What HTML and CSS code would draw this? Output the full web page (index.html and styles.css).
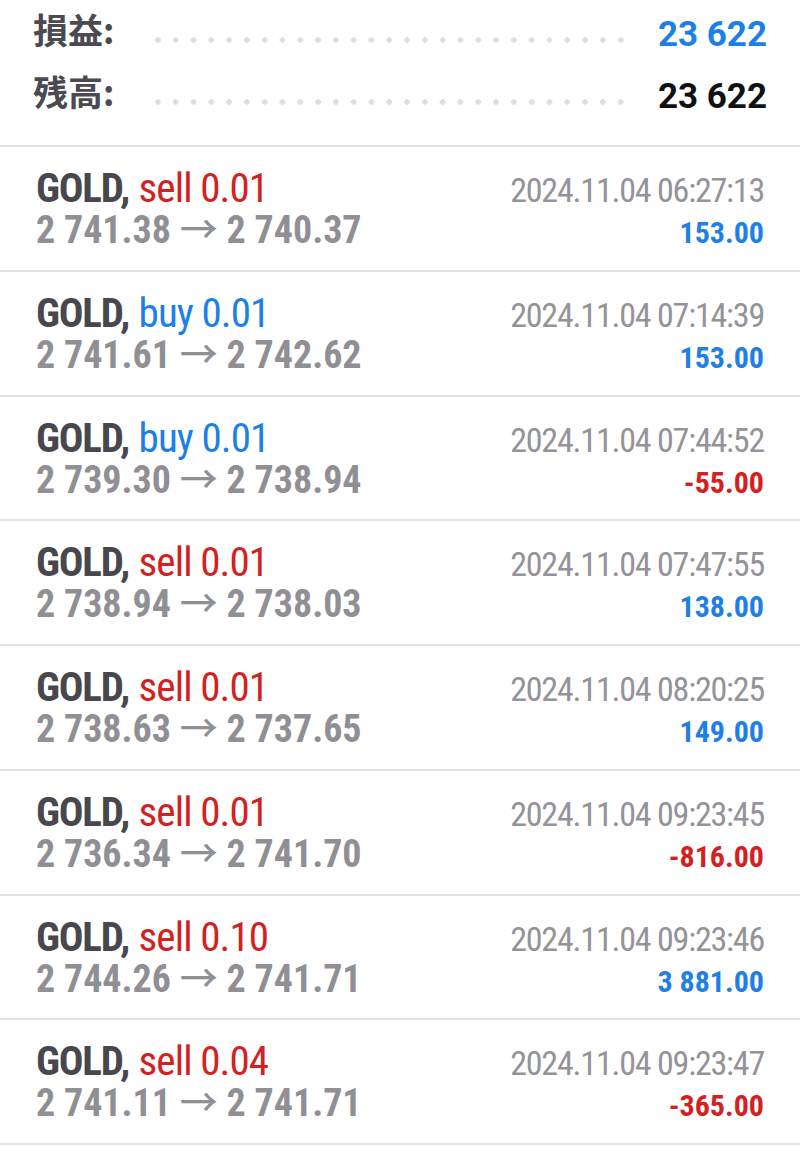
FILE: index.html
```html
<!DOCTYPE html>
<html lang="ja">
<head>
<meta charset="utf-8">
<link rel="stylesheet" href="styles.css">
</head>
<body>
<div class="summary">
  <div class="sum-line"><span class="sum-label">損益:</span><span class="dots"></span><span class="sum-value blue">23 622</span></div>
  <div class="sum-line"><span class="sum-label">残高:</span><span class="dots"></span><span class="sum-value black">23 622</span></div>
</div>
<div class="deals">
  <div class="deal">
    <div class="title"><b>GOLD,</b> <span class="sell">sell 0.01</span></div>
    <div class="time">2024.11.04 06:27:13</div>
    <div class="prices">2 741.38 <span class="arrow">→</span> 2 740.37</div>
    <div class="pnl pos">153.00</div>
  </div>
  <div class="deal">
    <div class="title"><b>GOLD,</b> <span class="buy">buy 0.01</span></div>
    <div class="time">2024.11.04 07:14:39</div>
    <div class="prices">2 741.61 <span class="arrow">→</span> 2 742.62</div>
    <div class="pnl pos">153.00</div>
  </div>
  <div class="deal">
    <div class="title"><b>GOLD,</b> <span class="buy">buy 0.01</span></div>
    <div class="time">2024.11.04 07:44:52</div>
    <div class="prices">2 739.30 <span class="arrow">→</span> 2 738.94</div>
    <div class="pnl neg">-55.00</div>
  </div>
  <div class="deal">
    <div class="title"><b>GOLD,</b> <span class="sell">sell 0.01</span></div>
    <div class="time">2024.11.04 07:47:55</div>
    <div class="prices">2 738.94 <span class="arrow">→</span> 2 738.03</div>
    <div class="pnl pos">138.00</div>
  </div>
  <div class="deal">
    <div class="title"><b>GOLD,</b> <span class="sell">sell 0.01</span></div>
    <div class="time">2024.11.04 08:20:25</div>
    <div class="prices">2 738.63 <span class="arrow">→</span> 2 737.65</div>
    <div class="pnl pos">149.00</div>
  </div>
  <div class="deal">
    <div class="title"><b>GOLD,</b> <span class="sell">sell 0.01</span></div>
    <div class="time">2024.11.04 09:23:45</div>
    <div class="prices">2 736.34 <span class="arrow">→</span> 2 741.70</div>
    <div class="pnl neg">-816.00</div>
  </div>
  <div class="deal">
    <div class="title"><b>GOLD,</b> <span class="sell">sell 0.10</span></div>
    <div class="time">2024.11.04 09:23:46</div>
    <div class="prices">2 744.26 <span class="arrow">→</span> 2 741.71</div>
    <div class="pnl pos">3 881.00</div>
  </div>
  <div class="deal">
    <div class="title"><b>GOLD,</b> <span class="sell">sell 0.04</span></div>
    <div class="time">2024.11.04 09:23:47</div>
    <div class="prices">2 741.11 <span class="arrow">→</span> 2 741.71</div>
    <div class="pnl neg">-365.00</div>
  </div>
  <div class="deal">
    <div class="title"><b>GOLD,</b> <span class="sell">sell 0.05</span></div>
    <div class="time">2024.11.04 09:23:48</div>
    <div class="prices">2 741.71 <span class="arrow">→</span> 2 741.71</div>
    <div class="pnl pos">0.00</div>
  </div>
</div>
</body>
</html>
```
FILE: styles.css
```css
html, body {
  margin: 0;
  padding: 0;
  background: #ffffff;
}
body {
  width: 800px;
  height: 1168px;
  overflow: hidden;
  font-family: Roboto, "Noto Sans CJK JP", sans-serif;
  font-stretch: condensed;
}
.summary {
  padding: 0 33px 21px 33px;
}
.sum-line {
  display: flex;
  align-items: baseline;
  height: 62px;
  line-height: 62px;
}
.sum-label {
  font-family: "Noto Sans CJK JP", sans-serif;
  font-size: 35px;
  font-weight: 700;
  color: #4a4a50;
  position: relative;
  top: -2px;
}
.dots {
  flex: 1;
  height: 6px;
  margin: 0 30px 0 35px;
  background-image: radial-gradient(circle, #dedede 2.5px, transparent 3px);
  background-size: 17.8px 6px;
  background-position: 0 0;
  background-repeat: repeat-x;
  align-self: center;
  transform: translateY(9px);
}
.sum-value {
  font-family: Roboto, sans-serif;
  font-stretch: normal;
  font-size: 35px;
  font-weight: 700;
}
.blue { color: #1e7fe6; }
.black { color: #111111; }

.deal {
  border-top: 2px solid #e2e2e2;
  box-sizing: content-box;
  padding: 19px 36px 0 36px;
  height: 103.75px;
  display: grid;
  grid-template-columns: 1fr auto;
  grid-template-rows: 44px 40px;
  align-items: baseline;
  align-content: start;
}
.title {
  font-size: 41px;
  line-height: 44px;
  color: #47474d;
  white-space: nowrap;
}
.title b {
  font-weight: 700;
  letter-spacing: -1.2px;
}
.sell, .buy { letter-spacing: -0.9px; }
.sell { color: #d32121; }
.buy { color: #1e7fe6; }
.time {
  font-size: 34px;
  line-height: 44px;
  letter-spacing: -1.2px;
  color: #939398;
  text-align: right;
  white-space: nowrap;
}
.prices {
  font-size: 38px;
  line-height: 40px;
  font-weight: 700;
  color: #8f8f94;
  white-space: nowrap;
}
.arrow {
  font-weight: 500;
}
.pnl {
  font-size: 30px;
  line-height: 40px;
  font-weight: 700;
  text-align: right;
}
.pos { color: #1e7fe6; }
.neg { color: #d32121; }
```
